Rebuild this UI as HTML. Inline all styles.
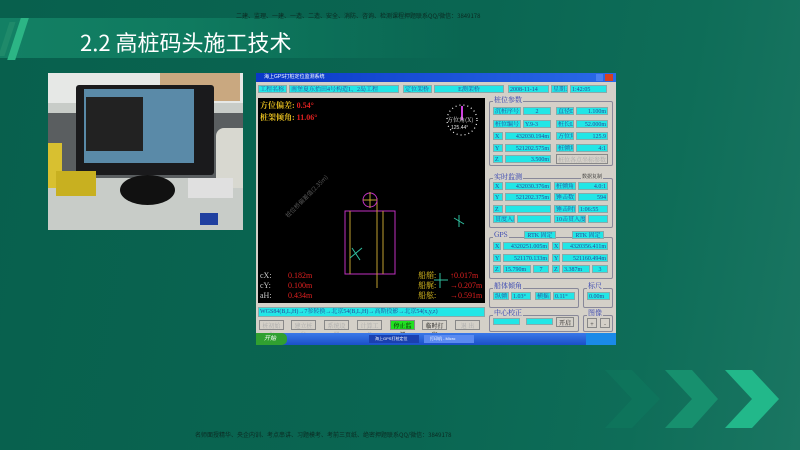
<!DOCTYPE html>
<html><head><meta charset="utf-8"><style>
*{margin:0;padding:0;box-sizing:border-box}
body{width:800px;height:450px;overflow:hidden;position:relative;background:linear-gradient(100deg,#08604d 0%,#0a6652 55%,#0e6d58 80%,#1a7662 100%);font-family:"Liberation Sans","Noto Sans CJK SC",sans-serif}
.a{position:absolute}
.c{position:absolute;background:#22e6e6;color:#2a4a9a;font-size:6px;line-height:8px;height:8px;padding:0 1px;white-space:nowrap;overflow:hidden;border:1px solid #8aa;font-family:"Liberation Serif","Noto Serif CJK SC",serif}
.g{position:absolute;border:1px solid #889;border-radius:2px}
.gt{position:absolute;background:#d4d0c8;color:#2a3ab0;font-size:7px;line-height:8px;padding:0 1px;font-family:"Noto Serif CJK SC",serif}
.b{position:absolute;background:#d4d0c8;border:1px solid #888;color:#aaa;font-size:6px;line-height:9px;height:10px;text-align:center;font-family:"Noto Serif CJK SC",serif}
.t{position:absolute;font-size:8px;line-height:10px;font-family:"Liberation Serif","Noto Serif CJK SC",serif;white-space:nowrap}
</style></head><body>
<div class="a" style="left:0;top:18px;width:470px;height:40px;background:linear-gradient(90deg,#138064 0%,#0f7a5f 40%,rgba(12,104,82,0) 100%)"></div>
<div class="a" style="left:14px;top:18px;width:8px;height:42px;background:#2cb585;transform:skewX(-18deg)"></div>
<div class="a" style="left:4px;top:22px;width:6px;height:34px;background:#1f8a6a;transform:skewX(-18deg)"></div>
<div class="a" style="left:80px;top:28px;color:#fff;font-size:22px;line-height:28px;font-family:'Noto Sans CJK SC',sans-serif">2.2 高桩码头施工技术</div>
<div class="a" style="left:236px;top:11px;color:#0b2a22;font-size:6px;white-space:nowrap;font-family:'Noto Sans CJK SC',sans-serif">二建、监理、一建、一造、二造、安全、消防、咨询、检测课程押题联系QQ/微信：3849178</div>
<div class="a" style="left:195px;top:430px;color:#0b2a22;font-size:6px;white-space:nowrap;font-family:'Noto Sans CJK SC',sans-serif">名师面授精华、央企内训、考点串讲、习题模考、考前三页纸、绝密押题联系QQ/微信：3849178</div>
<svg class="a" style="left:590px;top:370px" width="210" height="60"><polygon points="15,0 42,0 70,29 42,58 15,58 42,29" fill="#0e7a5f" opacity=".55"/><polygon points="75,0 102,0 128,29 102,58 75,58 102,29" fill="#17906e"/><polygon points="135,0 162,0 189,29 162,58 135,58 162,29" fill="#22b88a"/></svg>
<!-- photo -->
<div class="a" style="left:48px;top:73px;width:195px;height:157px;background:#c8ccc8;overflow:hidden">
<div class="a" style="left:0;top:0;width:195px;height:30px;background:#e6e8e6"></div>
<div class="a" style="left:112px;top:0;width:80px;height:28px;background:#c9a880"></div>
<div class="a" style="left:0;top:40px;width:195px;height:65px;background:#5a5e60"></div>
<div class="a" style="left:28px;top:12px;width:138px;height:90px;background:#1a1a1c;border-radius:3px"></div>
<div class="a" style="left:36px;top:16px;width:110px;height:74px;background:#5a8aa8"></div>
<div class="a" style="left:38px;top:24px;width:57px;height:54px;background:#222"></div>
<div class="a" style="left:72px;top:102px;width:55px;height:30px;background:#111;border-radius:50%"></div>
<div class="a" style="left:0;top:70px;width:14px;height:45px;background:#d8c030"></div>
<div class="a" style="left:8px;top:98px;width:40px;height:25px;background:#c8b020"></div>
<div class="a" style="left:168px;top:55px;width:27px;height:60px;background:#d8d8d0;border-radius:8px 0 0 0"></div>
<div class="a" style="left:140px;top:105px;width:45px;height:20px;background:#e0e0e0"></div>
<div class="a" style="left:152px;top:140px;width:18px;height:12px;background:#2040a0"></div>
</div>
<!-- software window -->
<div class="a" style="left:256px;top:73px;width:360px;height:272px;background:#d4d0c8;overflow:hidden">
<div class="a" style="left:0;top:0;width:360px;height:9px;background:linear-gradient(90deg,#0a38c8,#2a6ae8);color:#fff;font-size:5px;line-height:9px;padding-left:8px">海上GPS打桩定位监测系统</div>
<div class="a" style="left:340px;top:1px;width:7px;height:7px;background:#4a80f0"></div><div class="a" style="left:349px;top:1px;width:8px;height:7px;background:#d84020"></div>
<div class="c" style="left:2px;top:12px;width:29px">工程名称</div>
<div class="c" style="left:33px;top:12px;width:110px">南堡夏东抬田4号构造1、2岛工程</div>
<div class="c" style="left:147px;top:12px;width:29px">定位架桥</div>
<div class="c" style="left:178px;top:12px;width:70px;text-align:center">E测架桥</div>
<div class="c" style="left:252px;top:12px;width:41px">2008-11-14</div>
<div class="c" style="left:295px;top:12px;width:17px">星期五</div>
<div class="c" style="left:314px;top:12px;width:37px">1:42:05</div>
<!-- canvas -->
<div class="a" style="left:2px;top:25px;width:227px;height:205px;background:#000;overflow:hidden">
<div class="t" style="left:2px;top:3px;color:#e8c020;font-weight:bold">方位偏差:<span style="color:#e02020"> 0.54°</span></div>
<div class="t" style="left:2px;top:15px;color:#e8c020;font-weight:bold">桩架倾角:<span style="color:#e02020"> 11.06°</span></div>
<svg class="a" style="left:0;top:0" width="227" height="205">
<circle cx="204" cy="22" r="15" fill="none" stroke="#fff" stroke-dasharray="1 3" stroke-width="1.2"/>
<line x1="204" y1="22" x2="204" y2="8" stroke="#d040e0" stroke-width="2"/>
<text x="189" y="24" fill="#e0e0e0" font-size="6" font-family="Noto Serif CJK SC">方位角(X)</text>
<text x="193" y="31" fill="#e0e0e0" font-size="5">125.44°</text>
<text x="30" y="120" fill="#555" font-size="6" transform="rotate(-45 30 120)" font-family="Noto Sans CJK SC">桩位桥偏差值(2.35m)</text>
<rect x="87" y="113" width="50" height="63" fill="none" stroke="#c030c0"/>
<line x1="92" y1="113" x2="92" y2="176" stroke="#c0a030"/><line x1="119" y1="100" x2="119" y2="190" stroke="#c0a030"/><line x1="125" y1="113" x2="125" y2="176" stroke="#c0a030"/>
<circle cx="112" cy="102" r="7" fill="none" stroke="#c030c0"/><line x1="105" y1="102" x2="119" y2="102" stroke="#c0a030"/><line x1="112" y1="94" x2="112" y2="110" stroke="#c0a030"/>
<line x1="92" y1="160" x2="104" y2="150" stroke="#30c0a0"/><line x1="94" y1="150" x2="102" y2="162" stroke="#30c0a0"/>
<line x1="196" y1="120" x2="206" y2="126" stroke="#30c0a0"/><line x1="201" y1="117" x2="201" y2="129" stroke="#30c0a0"/>
<line x1="182" y1="175" x2="182" y2="190" stroke="#30c0a0"/><line x1="176" y1="182" x2="190" y2="182" stroke="#30c0a0"/>
</svg>
<div class="t" style="left:2px;top:173px;color:#ccc;line-height:10px">cX:<br>cY:<br>aH:</div>
<div class="t" style="left:30px;top:173px;color:#e02020;line-height:10px">0.182m<br>0.100m<br>0.434m</div>
<div class="t" style="left:160px;top:173px;color:#e0c020;line-height:10px">船艏:<br>船艉:<br>船舷:</div>
<div class="t" style="left:192px;top:173px;color:#e02020;line-height:10px">↑0.017m<br>→0.207m<br>→0.591m</div>
</div>
<!-- 桩位参数 -->
<div class="g" style="left:233px;top:28px;width:124px;height:65px"></div><div class="gt" style="left:237px;top:23px">桩位参数</div>
<div class="c" style="left:237px;top:34px;width:28px">沉桩序号</div><div class="c" style="left:267px;top:34px;width:28px;text-align:center">2</div><div class="c" style="left:300px;top:34px;width:18px">直径D</div><div class="c" style="left:320px;top:34px;width:32px;text-align:right">1.100m</div>
<div class="c" style="left:237px;top:47px;width:28px">桩位编号</div><div class="c" style="left:267px;top:47px;width:28px">Y.9-3</div><div class="c" style="left:300px;top:47px;width:18px">桩长L</div><div class="c" style="left:320px;top:47px;width:32px;text-align:right">52.000m</div>
<div class="c" style="left:237px;top:59px;width:10px">X</div><div class="c" style="left:249px;top:59px;width:46px;text-align:right">432030.194m</div><div class="c" style="left:300px;top:59px;width:18px">方位角</div><div class="c" style="left:320px;top:59px;width:32px;text-align:right">125.9</div>
<div class="c" style="left:237px;top:71px;width:10px">Y</div><div class="c" style="left:249px;top:71px;width:46px;text-align:right">521202.575m</div><div class="c" style="left:300px;top:71px;width:18px">桩倾角</div><div class="c" style="left:320px;top:71px;width:32px;text-align:right">4:1</div>
<div class="c" style="left:237px;top:82px;width:10px">Z</div><div class="c" style="left:249px;top:82px;width:46px;text-align:right">3.500m</div><div class="b" style="left:300px;top:81px;width:52px">桩位各点坐标参数</div>
<!-- 实时监测 -->
<div class="g" style="left:233px;top:105px;width:124px;height:50px"></div><div class="gt" style="left:237px;top:100px">实时监测</div><div class="gt" style="left:325px;top:100px;color:#222;font-size:5px">数据复制</div>
<div class="c" style="left:237px;top:109px;width:10px">X</div><div class="c" style="left:249px;top:109px;width:46px;text-align:right">432030.376m</div><div class="c" style="left:298px;top:109px;width:22px">桩倾角</div><div class="c" style="left:322px;top:109px;width:30px;text-align:right">4.0:1</div>
<div class="c" style="left:237px;top:120px;width:10px">Y</div><div class="c" style="left:249px;top:120px;width:46px;text-align:right">521202.375m</div><div class="c" style="left:298px;top:120px;width:22px">锤击数</div><div class="c" style="left:322px;top:120px;width:30px;text-align:right">594</div>
<div class="c" style="left:237px;top:132px;width:10px">Z</div><div class="c" style="left:249px;top:132px;width:46px"></div><div class="c" style="left:298px;top:132px;width:22px">锤击时间</div><div class="c" style="left:322px;top:132px;width:30px">1:06:55</div>
<div class="c" style="left:237px;top:142px;width:22px">贯度入度</div><div class="c" style="left:261px;top:142px;width:34px"></div><div class="c" style="left:298px;top:142px;width:32px">10击贯入度</div><div class="c" style="left:332px;top:142px;width:20px"></div>
<!-- GPS -->
<div class="g" style="left:233px;top:164px;width:124px;height:42px"></div><div class="gt" style="left:237px;top:158px">GPS</div><div class="c" style="left:268px;top:158px;width:32px;text-align:center">RTK 固定</div><div class="c" style="left:316px;top:158px;width:32px;text-align:center">RTK 固定</div>
<div class="c" style="left:237px;top:169px;width:8px">X</div><div class="c" style="left:247px;top:169px;width:46px;text-align:right">4320251.005m</div><div class="c" style="left:296px;top:169px;width:8px">X</div><div class="c" style="left:306px;top:169px;width:46px;text-align:right">4320356.411m</div>
<div class="c" style="left:237px;top:181px;width:8px">Y</div><div class="c" style="left:247px;top:181px;width:46px;text-align:right">521170.133m</div><div class="c" style="left:296px;top:181px;width:8px">Y</div><div class="c" style="left:306px;top:181px;width:46px;text-align:right">521160.494m</div>
<div class="c" style="left:237px;top:192px;width:8px">Z</div><div class="c" style="left:247px;top:192px;width:28px">15.790m</div><div class="c" style="left:277px;top:192px;width:16px;text-align:center">7</div><div class="c" style="left:296px;top:192px;width:8px">Z</div><div class="c" style="left:306px;top:192px;width:28px">3.387m</div><div class="c" style="left:336px;top:192px;width:16px;text-align:center">3</div>
<!-- 船体倾角 -->
<div class="g" style="left:233px;top:215px;width:90px;height:20px"></div><div class="gt" style="left:237px;top:209px">船体倾角</div>
<div class="c" style="left:237px;top:219px;width:16px">纵倾</div><div class="c" style="left:255px;top:219px;width:20px">1.03°</div><div class="c" style="left:279px;top:219px;width:16px">横摇</div><div class="c" style="left:297px;top:219px;width:22px">0.11°</div>
<div class="g" style="left:327px;top:215px;width:30px;height:20px"></div><div class="gt" style="left:331px;top:209px">标尺</div><div class="c" style="left:331px;top:219px;width:23px">0.00m</div>
<!-- bottom -->
<div class="c" style="left:2px;top:234px;width:227px;height:10px">WGS84(B,L,H)→7参转换→北京54(B,L,H)→高斯投影→北京54(x,y,z)</div>
<div class="g" style="left:233px;top:242px;width:90px;height:17px"></div><div class="gt" style="left:237px;top:236px">中心校正</div><div class="c" style="left:237px;top:245px;width:27px;height:7px"></div><div class="c" style="left:270px;top:245px;width:27px;height:7px"></div><div class="b" style="left:300px;top:244px;width:18px;color:#000">开启</div>
<div class="g" style="left:327px;top:242px;width:30px;height:17px"></div><div class="gt" style="left:331px;top:236px">图像</div><div class="b" style="left:331px;top:245px;width:10px;color:#000">+</div><div class="b" style="left:344px;top:245px;width:10px;color:#000">-</div>
<div class="b" style="left:3px;top:247px;width:25px">桩初始化</div><div class="b" style="left:35px;top:247px;width:25px">建立桩位</div><div class="b" style="left:68px;top:247px;width:25px">系统设置</div><div class="b" style="left:101px;top:247px;width:25px">计算工具</div>
<div class="b" style="left:134px;top:247px;width:25px;background:#20e020;color:#000">停止监测</div><div class="b" style="left:166px;top:247px;width:25px;color:#000">临时打印</div><div class="b" style="left:199px;top:247px;width:25px">退 出</div>
<div class="a" style="left:0;top:260px;width:360px;height:12px;background:linear-gradient(#3a78e8,#1a50c8)"></div>
<div class="a" style="left:0;top:260px;width:31px;height:12px;background:#30a030;color:#fff;font-size:6px;line-height:12px;padding-left:8px;border-radius:0 5px 5px 0;font-style:italic">开始</div>
<div class="a" style="left:113px;top:262px;width:50px;height:8px;background:#1a40b0;color:#fff;font-size:4px;line-height:8px;padding-left:6px">海上GPS打桩定位</div>
<div class="a" style="left:168px;top:262px;width:50px;height:8px;background:#5a8af0;color:#fff;font-size:4px;line-height:8px;padding-left:6px">打印机 - Micro</div>
<div class="a" style="left:330px;top:260px;width:30px;height:12px;background:#1a8ae8"></div>
</div>
</body></html>
